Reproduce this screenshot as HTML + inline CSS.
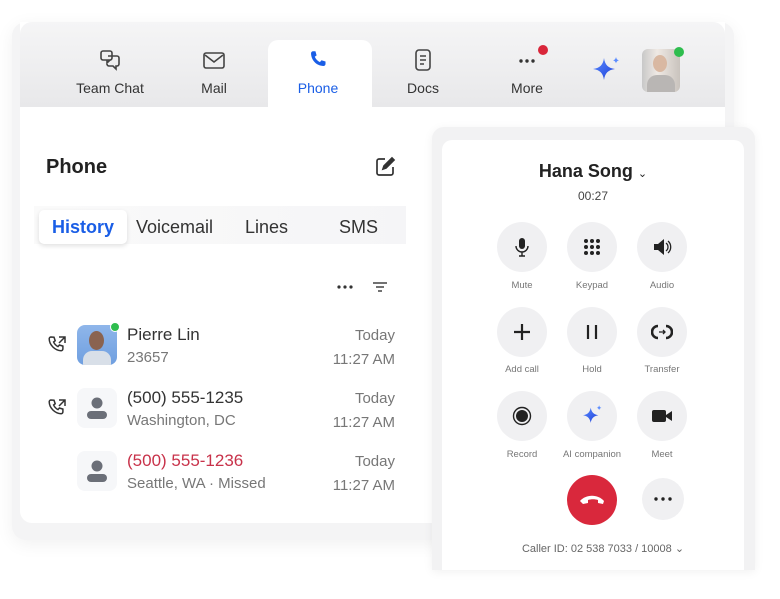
<!DOCTYPE html>
<html><head><meta charset="utf-8"><style>
*{box-sizing:border-box;margin:0;padding:0}
body{width:780px;height:599px;background:#fff;font-family:"Liberation Sans",sans-serif;position:relative;overflow:hidden;color:#222}
.a{position:absolute}
.frame{left:12px;top:22px;width:722px;height:518px;background:#f4f4f5;border-radius:14px;box-shadow:0 4px 18px rgba(0,0,0,.06)}
.inner{left:20px;top:22px;width:705px;height:501px;background:#fff;border-radius:0 0 12px 12px}
.tabbar{left:20px;top:22px;width:705px;height:85px;background:linear-gradient(#f5f5f6,#e8e8ea);border-radius:12px 12px 0 0}
.tab{position:absolute;top:40px;width:104px;height:67px;text-align:center;font-size:14px;color:#333}
.tab span{position:absolute;left:0;right:0;top:40px}
.tab svg{position:absolute;left:41px;top:8px}
.cp{left:432px;top:127px;width:323px;height:443px;background:#f2f2f3;border-radius:12px 12px 0 0;box-shadow:0 2px 10px rgba(0,0,0,.06)}
.ci{left:442px;top:140px;width:302px;height:430px;background:#fff;border-radius:10px 10px 0 0}
.btn{position:absolute;width:50px;height:50px;border-radius:50%;background:#f0f0f2}
.lbl{position:absolute;width:90px;text-align:center;font-size:9.5px;color:#777}
.row .n{font-size:17px;color:#333}
.gray{color:#777;font-size:15px}
</style></head><body>
<div class="a frame"></div>
<div class="a inner"></div>
<div class="a tabbar"></div>
<div class="a" style="left:268px;top:40px;width:104px;height:67px;background:#fff;border-radius:10px 10px 0 0"></div>
<div class="tab" style="left:58px"><svg width="22" height="24" viewBox="0 0 22 24" fill="none" stroke="#444" stroke-width="1.6"><rect x="2" y="3" width="11" height="9" rx="2"/><path d="M8 12v3l3-3M9 8h9a2 2 0 0 1 2 2v6a2 2 0 0 1-2 2h-1v3l-3-3h-4a2 2 0 0 1-2-2"/></svg><span>Team Chat</span></div>
<div class="tab" style="left:162px"><svg width="22" height="24" viewBox="0 0 22 24" fill="none" stroke="#444" stroke-width="1.6"><rect x="1" y="5" width="20" height="15" rx="2"/><path d="M2 7l9 7 9-7"/></svg><span>Mail</span></div>
<div class="tab" style="left:266px;color:#1a5ee6"><svg width="22" height="24" viewBox="0 0 24 24"><path fill="#1a5ee6" d="M6.6 2.5l2.6 0 1.3 4.4-2 1.6c1 2.6 3 4.6 5.6 5.8l1.7-2 4.4 1.4v2.6c0 1.2-1 2.2-2.2 2.2C10.3 18.5 4.5 12 4.4 4.8c0-1.3 1-2.3 2.2-2.3z"/></svg><span>Phone</span></div>
<div class="tab" style="left:371px"><svg width="22" height="24" viewBox="0 0 22 24" fill="none" stroke="#444" stroke-width="1.6"><rect x="4" y="2" width="14" height="20" rx="3"/><path d="M8 8h6M8 12h6M8 16h4"/></svg><span>Docs</span></div>
<div class="tab" style="left:475px"><svg width="22" height="24" viewBox="0 0 22 24" fill="#333"><circle cx="5" cy="13" r="1.7"/><circle cx="11" cy="13" r="1.7"/><circle cx="17" cy="13" r="1.7"/></svg><span>More</span></div>
<div class="a" style="left:538px;top:45px;width:10px;height:10px;border-radius:50%;background:#d9263a"></div>
<svg class="a" style="left:590px;top:55px" width="34" height="32" viewBox="0 0 34 32"><defs><linearGradient id="g" x1="0" y1="0" x2="1" y2="1"><stop offset="0" stop-color="#5b8cff"/><stop offset="1" stop-color="#1d3fd8"/></linearGradient></defs><path fill="url(#g)" d="M14 3c1 7 4 10 11 11-7 1-10 4-11 11-1-7-4-10-11-11 7-1 10-4 11-11z"/><path fill="#5b8cff" d="M26 2c.4 2 1.3 3 3 3.4-1.7.4-2.6 1.3-3 3-.4-1.7-1.3-2.6-3-3 1.7-.4 2.6-1.4 3-3.4z"/></svg>
<div class="a" style="left:642px;top:49px;width:38px;height:43px;border-radius:6px;background:linear-gradient(90deg,#c8c8c8,#efe9e4 40%,#c9c3bd);overflow:hidden"><div class="a" style="left:11px;top:6px;width:14px;height:17px;border-radius:50%;background:#d9b8a2"></div><div class="a" style="left:5px;top:26px;width:28px;height:20px;border-radius:10px 10px 0 0;background:#b9b6b4"></div></div>
<div class="a" style="left:674px;top:47px;width:10px;height:10px;border-radius:50%;background:#2ebd4e"></div>

<div class="a" style="left:46px;top:156px;font-size:20px;font-weight:bold;color:#222">Phone</div>
<svg class="a" style="left:374px;top:156px" width="22" height="22" viewBox="0 0 22 22" fill="none" stroke="#333" stroke-width="1.7"><path d="M11 3H5a2 2 0 0 0-2 2v12a2 2 0 0 0 2 2h12a2 2 0 0 0 2-2v-6"/><path d="M18 2l2 2-8 8-3 1 1-3z" fill="#333"/></svg>
<div class="a" style="left:34px;top:206px;width:372px;height:38px;background:linear-gradient(90deg,#fafafa,#f5f5f7)"></div>
<div class="a" style="left:39px;top:210px;width:88px;height:34px;background:#fff;border-radius:5px;box-shadow:0 2px 5px rgba(0,0,0,.12)"></div>
<div class="a" style="left:52px;top:217px;font-size:18px;color:#1a5ee6;font-weight:bold">History</div>
<div class="a" style="left:136px;top:217px;font-size:18px;color:#333">Voicemail</div>
<div class="a" style="left:245px;top:217px;font-size:18px;color:#333">Lines</div>
<div class="a" style="left:339px;top:217px;font-size:18px;color:#333">SMS</div>
<svg class="a" style="left:336px;top:282px" width="20" height="10"><g fill="#333"><circle cx="3" cy="5" r="1.6"/><circle cx="9" cy="5" r="1.6"/><circle cx="15" cy="5" r="1.6"/></g></svg>
<svg class="a" style="left:372px;top:281px" width="16" height="12" stroke="#444" stroke-width="1.5"><path d="M1 2h14M4 6h8M6 10h4"/></svg>

<svg class="a" style="left:46px;top:334px" width="22" height="22" viewBox="0 0 22 22" fill="none" stroke="#333" stroke-width="1.5"><path d="M5 3l3 .2 1.2 3.5-1.6 1.3c.9 2 2.4 3.6 4.4 4.6l1.4-1.6 3.5 1.1v2.8c0 1-.8 1.8-1.8 1.8C9 16.5 3.3 11 3.2 4.8 3.2 3.8 4 3 5 3z"/><path d="M13 3h6v6M19 3l-6 6"/></svg>
<svg class="a" style="left:46px;top:397px" width="22" height="22" viewBox="0 0 22 22" fill="none" stroke="#333" stroke-width="1.5"><path d="M5 3l3 .2 1.2 3.5-1.6 1.3c.9 2 2.4 3.6 4.4 4.6l1.4-1.6 3.5 1.1v2.8c0 1-.8 1.8-1.8 1.8C9 16.5 3.3 11 3.2 4.8 3.2 3.8 4 3 5 3z"/><path d="M13 3h6v6M19 3l-6 6"/></svg>
<div class="a" style="left:77px;top:325px;width:40px;height:40px;border-radius:8px;background:linear-gradient(#8fb6ea,#6f9fe0);overflow:hidden"><div class="a" style="left:12px;top:6px;width:15px;height:19px;border-radius:50%;background:#8a6350"></div><div class="a" style="left:6px;top:26px;width:28px;height:16px;border-radius:9px 9px 0 0;background:#d8dfe8"></div></div>
<div class="a" style="left:110px;top:322px;width:10px;height:10px;border-radius:50%;background:#2ebd4e;border:1px solid #fff"></div>
<div class="a" style="left:77px;top:388px;width:40px;height:40px;border-radius:8px;background:#f6f7f9"></div>
<div class="a" style="left:77px;top:451px;width:40px;height:40px;border-radius:8px;background:#f6f7f9"></div>
<svg class="a" style="left:85px;top:395px" width="24" height="26"><circle cx="12" cy="8" r="5.5" fill="#6b6f78"/><rect x="2" y="16" width="20" height="8" rx="4" fill="#6b6f78"/></svg>
<svg class="a" style="left:85px;top:458px" width="24" height="26"><circle cx="12" cy="8" r="5.5" fill="#6b6f78"/><rect x="2" y="16" width="20" height="8" rx="4" fill="#6b6f78"/></svg>
<div class="a row" style="left:127px;top:325px"><div class="n">Pierre Lin</div><div class="gray" style="margin-top:4px">23657</div></div>
<div class="a row" style="left:127px;top:388px"><div class="n">(500) 555-1235</div><div class="gray" style="margin-top:4px">Washington, DC</div></div>
<div class="a row" style="left:127px;top:451px"><div class="n" style="color:#c8324a">(500) 555-1236</div><div class="gray" style="margin-top:4px">Seattle, WA · Missed</div></div>
<div class="a gray" style="right:385px;top:324px;text-align:right;line-height:24px">Today<br>11:27 AM</div>
<div class="a gray" style="right:385px;top:387px;text-align:right;line-height:24px">Today<br>11:27 AM</div>
<div class="a gray" style="right:385px;top:450px;text-align:right;line-height:24px">Today<br>11:27 AM</div>

<div class="a cp"></div>
<div class="a ci"></div>
<div class="a" style="left:442px;top:161px;width:302px;text-align:center;font-size:18px;font-weight:bold;color:#222">Hana Song <span style="font-size:11px;font-weight:normal">&#8964;</span></div>
<div class="a" style="left:442px;top:189px;width:302px;text-align:center;font-size:12px;color:#444">00:27</div>

<div class="btn" style="left:497px;top:222px"></div><div class="btn" style="left:567px;top:222px"></div><div class="btn" style="left:637px;top:222px"></div>
<div class="btn" style="left:497px;top:307px"></div><div class="btn" style="left:567px;top:307px"></div><div class="btn" style="left:637px;top:307px"></div>
<div class="btn" style="left:497px;top:391px"></div><div class="btn" style="left:567px;top:391px"></div><div class="btn" style="left:637px;top:391px"></div>
<div class="lbl" style="left:477px;top:280px">Mute</div><div class="lbl" style="left:547px;top:280px">Keypad</div><div class="lbl" style="left:617px;top:280px">Audio</div>
<div class="lbl" style="left:477px;top:364px">Add call</div><div class="lbl" style="left:547px;top:364px">Hold</div><div class="lbl" style="left:617px;top:364px">Transfer</div>
<div class="lbl" style="left:477px;top:449px">Record</div><div class="lbl" style="left:547px;top:449px">AI companion</div><div class="lbl" style="left:617px;top:449px">Meet</div>

<svg class="a" style="left:512px;top:237px" width="20" height="20" viewBox="0 0 20 20"><rect x="7" y="1" width="6" height="11" rx="3" fill="#222"/><path d="M4 9a6 6 0 0 0 12 0M10 15v4M7 19h6" stroke="#222" stroke-width="1.4" fill="none"/></svg>
<svg class="a" style="left:582px;top:237px" width="20" height="20"><g fill="#222"><circle cx="4" cy="4" r="2"/><circle cx="10" cy="4" r="2"/><circle cx="16" cy="4" r="2"/><circle cx="4" cy="10" r="2"/><circle cx="10" cy="10" r="2"/><circle cx="16" cy="10" r="2"/><circle cx="4" cy="16" r="2"/><circle cx="10" cy="16" r="2"/><circle cx="16" cy="16" r="2"/></g></svg>
<svg class="a" style="left:652px;top:237px" width="20" height="20"><path d="M2 7h4l6-5v16l-6-5H2z" fill="#222"/><path d="M14 6a5 5 0 0 1 0 8M16 4a8 8 0 0 1 0 12" stroke="#222" stroke-width="1.3" fill="none"/></svg>
<svg class="a" style="left:512px;top:322px" width="20" height="20"><path d="M10 2v16M2 10h16" stroke="#222" stroke-width="2.2"/></svg>
<svg class="a" style="left:582px;top:322px" width="20" height="20"><path d="M6 3v14M14 3v14" stroke="#222" stroke-width="2.2"/></svg>
<svg class="a" style="left:651px;top:322px" width="22" height="20"><path d="M7 4a6 6 0 0 0 0 12M15 4a6 6 0 0 1 0 12" stroke="#222" stroke-width="2.6" fill="none"/><path d="M8 10h6M12 8l2 2-2 2" stroke="#222" stroke-width="1.3" fill="none"/></svg>
<svg class="a" style="left:512px;top:406px" width="20" height="20"><circle cx="10" cy="10" r="8.5" stroke="#222" stroke-width="1.4" fill="none"/><circle cx="10" cy="10" r="6" fill="#222"/></svg>
<svg class="a" style="left:580px;top:403px" width="26" height="26" viewBox="0 0 34 32"><path fill="url(#g)" d="M14 5c1 6 4 9 10 10-6 1-9 4-10 10-1-6-4-9-10-10 6-1 9-4 10-10z"/><path fill="#5b8cff" d="M25 2c.4 2 1.3 3 3 3.4-1.7.4-2.6 1.3-3 3-.4-1.7-1.3-2.6-3-3 1.7-.4 2.6-1.4 3-3.4z"/></svg>
<svg class="a" style="left:651px;top:407px" width="22" height="18"><rect x="1" y="3" width="14" height="12" rx="2" fill="#222"/><path d="M15 8l6-4v10l-6-4z" fill="#222"/></svg>

<div class="a" style="left:567px;top:475px;width:50px;height:50px;border-radius:50%;background:#d9283c"></div>
<svg class="a" style="left:578px;top:492px" width="28" height="14" viewBox="0 0 28 14"><path d="M2 9c6-7 18-7 24 0l-1 3-5-1v-3c-3-1-7-1-10 0v3l-5 1z" fill="#fff"/></svg>
<div class="a" style="left:642px;top:478px;width:42px;height:42px;border-radius:50%;background:#f0f0f2"></div>
<svg class="a" style="left:653px;top:494px" width="20" height="10"><g fill="#222"><circle cx="3" cy="5" r="1.7"/><circle cx="10" cy="5" r="1.7"/><circle cx="17" cy="5" r="1.7"/></g></svg>
<div class="a" style="left:442px;top:542px;width:322px;text-align:center;font-size:11px;color:#666">Caller ID: 02 538 7033 / 10008 &#8964;</div>
</body></html>
